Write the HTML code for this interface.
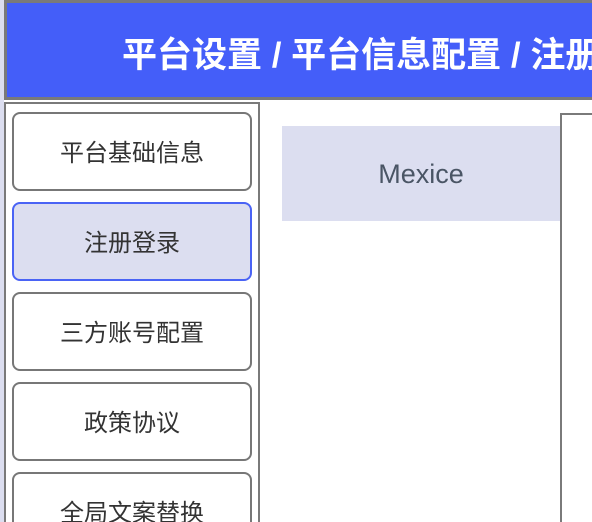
<!DOCTYPE html>
<html><head><meta charset="utf-8"><style>
html,body{margin:0;padding:0;width:592px;height:522px;overflow:hidden;background:#fff;font-family:"Liberation Sans","Noto Sans CJK SC",sans-serif;position:relative}
.strip{position:absolute;left:0;top:0;width:4px;height:522px;background:#dcdef0}
.hdr{position:absolute;left:4px;top:0;width:600px;height:94px;border:3px solid #7a7a7a;background:#445ef9;box-sizing:content-box;overflow:hidden}
.hdr span{position:absolute;left:115px;top:32px;color:#fff;font-size:35px;font-weight:bold;white-space:nowrap;line-height:42px}
.side{position:absolute;left:4px;top:102px;width:252px;height:430px;border:2px solid #7a7a7a;background:#fff}
.btn{position:absolute;left:6px;width:236px;height:75px;border:2px solid #777;border-radius:8px;background:#fff;text-align:center;line-height:80px;font-size:24px;color:#333;box-sizing:content-box;overflow:hidden}
.btn.sel{background:#dcdef0;border-color:#4a63f5}
.mex{position:absolute;left:282px;top:126px;width:278px;height:95px;background:#dcdef0;color:#4a5565;font-size:27px;text-align:center;line-height:97px}
.rp{position:absolute;left:560px;top:113px;width:60px;height:420px;border:2px solid #7a7a7a;background:#fff}
</style></head><body>
<div class="strip"></div>
<div class="hdr"><span>平台设置 / 平台信息配置 / 注册登录</span></div>
<div class="side">
<div class="btn" style="top:8px">平台基础信息</div>
<div class="btn sel" style="top:98px">注册登录</div>
<div class="btn" style="top:188px">三方账号配置</div>
<div class="btn" style="top:278px">政策协议</div>
<div class="btn" style="top:368px">全局文案替换</div>
</div>
<div class="mex">Mexice</div>
<div class="rp"></div>
</body></html>
